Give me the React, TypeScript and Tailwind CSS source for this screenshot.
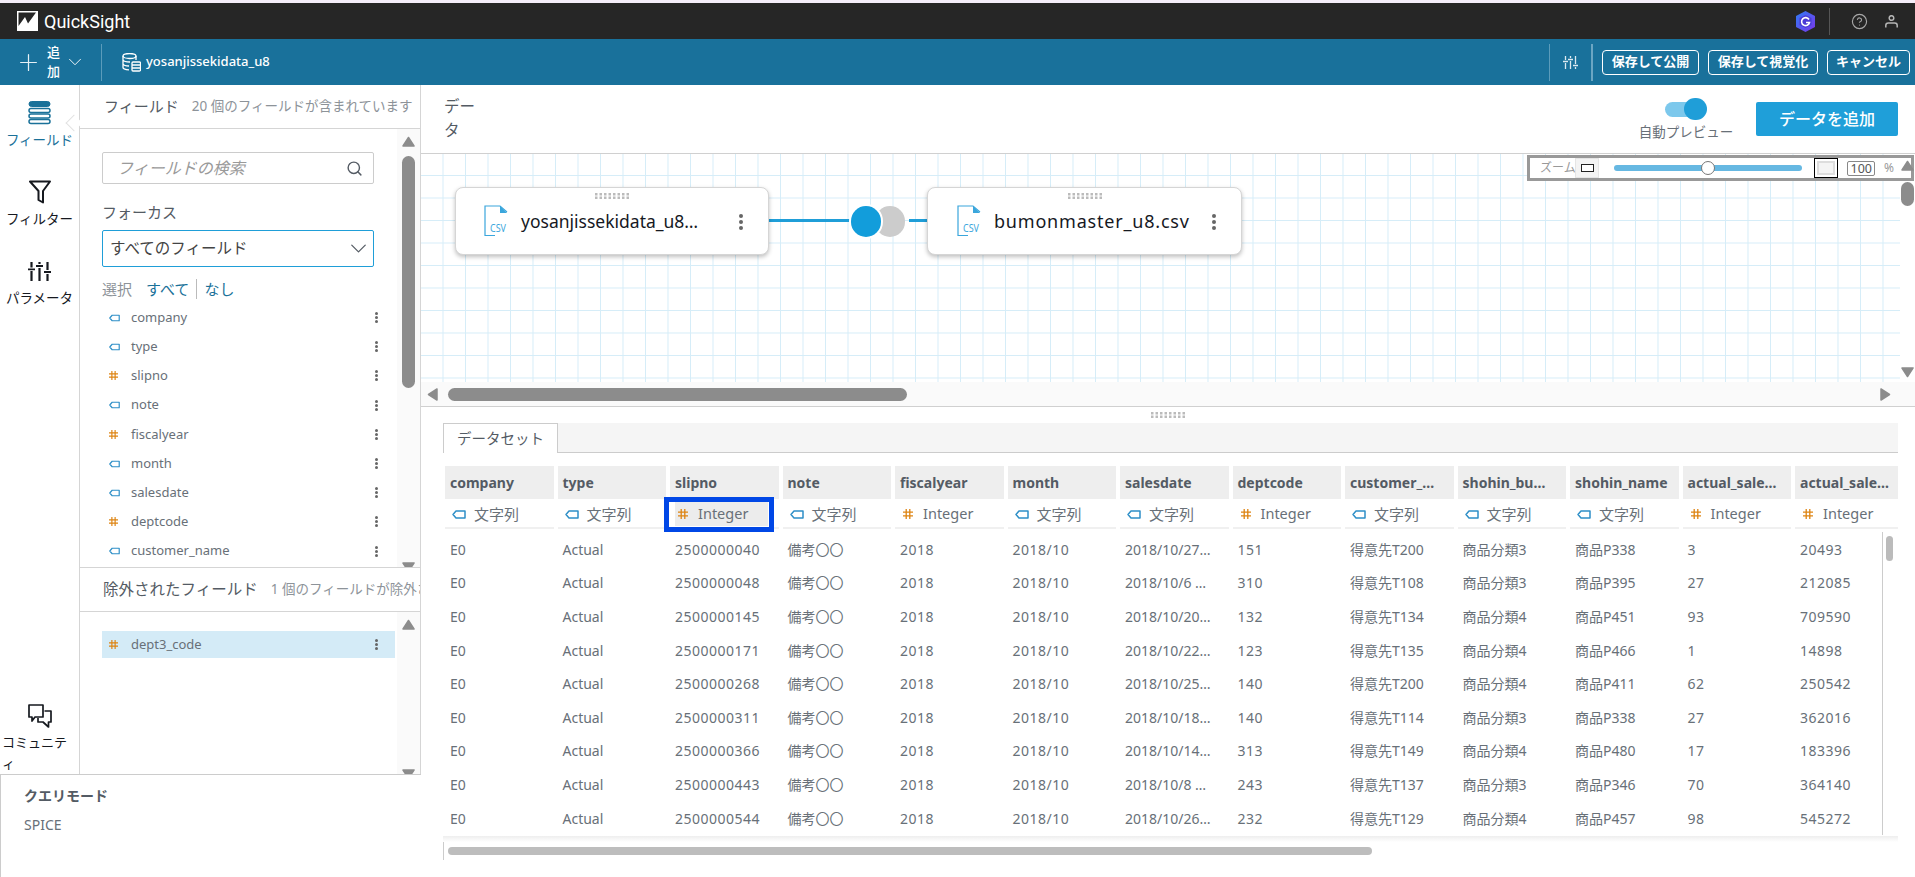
import { ChevronDown, CircleHelp, Plus, Search } from "lucide-react";

const FIELDS: { name: string; num?: boolean }[] = [
  { name: "company" },
  { name: "type" },
  { name: "slipno", num: true },
  { name: "note" },
  { name: "fiscalyear", num: true },
  { name: "month" },
  { name: "salesdate" },
  { name: "deptcode", num: true },
  { name: "customer_name" },
];

const COLUMNS: { name: string; num?: boolean }[] = [
  { name: "company" },
  { name: "type" },
  { name: "slipno", num: true },
  { name: "note" },
  { name: "fiscalyear", num: true },
  { name: "month" },
  { name: "salesdate" },
  { name: "deptcode", num: true },
  { name: "customer_…" },
  { name: "shohin_bu…" },
  { name: "shohin_name" },
  { name: "actual_sale…", num: true },
  { name: "actual_sale…", num: true },
];

const ROWS = [
  ["2500000040", "2018/10/27…", "151", "得意先T200", "商品分類3", "商品P338", "3", "20493"],
  ["2500000048", "2018/10/6 …", "310", "得意先T108", "商品分類3", "商品P395", "27", "212085"],
  ["2500000145", "2018/10/20…", "132", "得意先T134", "商品分類4", "商品P451", "93", "709590"],
  ["2500000171", "2018/10/22…", "123", "得意先T135", "商品分類4", "商品P466", "1", "14898"],
  ["2500000268", "2018/10/25…", "140", "得意先T200", "商品分類4", "商品P411", "62", "250542"],
  ["2500000311", "2018/10/18…", "140", "得意先T114", "商品分類3", "商品P338", "27", "362016"],
  ["2500000366", "2018/10/14…", "313", "得意先T149", "商品分類4", "商品P480", "17", "183396"],
  ["2500000443", "2018/10/8 …", "243", "得意先T137", "商品分類3", "商品P346", "70", "364140"],
  ["2500000544", "2018/10/26…", "232", "得意先T129", "商品分類4", "商品P457", "98", "545272"],
];

// columns whose digits run a little wider than Noto Sans in the reference
const WIDE_DIGITS = [2, 4, 5, 7, 11, 12];

function TagIcon({ w = 11, h = 8 }: { w?: number; h?: number }) {
  return (
    <svg width={w} height={h} viewBox="0 0 14 9" fill="none" className="shrink-0">
      <path d="M1 4.5 L4 1 H13 V8 H4 Z" stroke="#2e8fc7" strokeWidth="1.5" strokeLinejoin="round" />
    </svg>
  );
}

function HashIcon({ size = 9 }: { size?: number }) {
  return (
    <svg width={size} height={size} viewBox="0 0 10 10" stroke="#dd8412" strokeWidth="1.3" className="shrink-0">
      <path d="M3.2 0 V10 M6.8 0 V10 M0 3.2 H10 M0 6.8 H10" />
    </svg>
  );
}

function Kebab({ large = false }: { large?: boolean }) {
  const dot = large ? "w-[4px] h-[4px] bg-[#666]" : "w-[3px] h-[3px] bg-[#666]";
  return (
    <div className={`flex flex-col items-center ${large ? "gap-[2px]" : "gap-[1px]"}`}>
      <span className={`rounded-full ${dot}`} />
      <span className={`rounded-full ${dot}`} />
      <span className={`rounded-full ${dot}`} />
    </div>
  );
}

function DragDots() {
  return (
    <svg width="34" height="6" viewBox="0 0 34 6" fill="#bbb">
      {[0, 1, 2, 3, 4, 5, 6, 7].map((i) => (
        <g key={i}>
          <rect x={i * 4.5} y="0" width="2.5" height="2.5" />
          <rect x={i * 4.5} y="3.5" width="2.5" height="2.5" />
        </g>
      ))}
    </svg>
  );
}

function ArrowUp() {
  return (
    <svg width="13" height="11" viewBox="0 0 13 11" fill="#8c8c8c" className="shrink-0">
      <path d="M6.5 1.5 L12 10 H1 Z" stroke="#8c8c8c" strokeWidth="1.5" strokeLinejoin="round" />
    </svg>
  );
}

function ArrowDown() {
  return (
    <svg width="13" height="11" viewBox="0 0 13 11" fill="#8c8c8c" className="shrink-0">
      <path d="M6.5 9.5 L12 1 H1 Z" stroke="#8c8c8c" strokeWidth="1.5" strokeLinejoin="round" />
    </svg>
  );
}

function ArrowSide({ right = false }: { right?: boolean }) {
  return (
    <svg width="11" height="13" viewBox="0 0 11 13" fill="#8c8c8c" className="shrink-0">
      <path
        d={right ? "M9.5 6.5 L1 1 V12 Z" : "M1.5 6.5 L10 1 V12 Z"}
        stroke="#8c8c8c"
        strokeWidth="1.5"
        strokeLinejoin="round"
      />
    </svg>
  );
}

function CsvIcon() {
  return (
    <svg width="24" height="32" viewBox="0 0 24 32" fill="none" className="shrink-0 overflow-visible">
      <path d="M11 30.5 H1 V1 H16 L23 7" stroke="#3aa6dc" strokeWidth="1.2" />
      <path d="M16 1 L23 8 H16 Z" fill="#3aa6dc" />
      <text x="6" y="27" fontSize="11" fill="#3aa6dc" textLength="16" lengthAdjust="spacingAndGlyphs">
        CSV
      </text>
    </svg>
  );
}

function RailItem({ label, icon, active = false }: { label: string; icon: React.ReactNode; active?: boolean }) {
  return (
    <div className={`flex flex-col items-center w-full ${active ? "text-[#1a7199]" : "text-[#16191f]"}`}>
      <div className="h-[24px] flex items-center justify-center">{icon}</div>
      <div className="text-[13.5px] leading-[21px] mt-[5px] text-center whitespace-nowrap">{label}</div>
    </div>
  );
}

function Rail() {
  return (
    <div className="relative w-[80px] shrink-0 border-r border-[#d5d5d5] flex flex-col items-center pt-[16px]">
      <div className="absolute right-[-1px] top-[32px] w-[12px] h-[12px] rotate-45 bg-white border-l border-b border-[#e2e2e2]" />
      <RailItem
        active
        label="フィールド"
        icon={
          <svg width="23" height="24" viewBox="0 0 23 24" fill="none" stroke="#1a7199">
            <rect x="1" y="0.5" width="21" height="5" rx="2.5" fill="#1a7199" strokeWidth="1" />
            <rect x="1" y="7.5" width="21" height="4" rx="2" strokeWidth="1.5" />
            <rect x="1" y="13" width="21" height="4" rx="2" strokeWidth="1.5" />
            <rect x="1" y="18.5" width="21" height="4" rx="2" strokeWidth="1.5" />
          </svg>
        }
      />
      <div className="h-[29px]" />
      <RailItem
        label="フィルター"
        icon={
          <svg width="22" height="24" viewBox="0 0 22 24" fill="none" stroke="#16191f" strokeWidth="2">
            <path d="M1 1.5 H21 L14 11 V22.5 L9.5 20 V11 Z" strokeLinejoin="round" />
          </svg>
        }
      />
      <div className="h-[29px]" />
      <RailItem
        label="パラメータ"
        icon={
          <svg width="23" height="19" viewBox="0 0 23 19" stroke="#16191f" strokeWidth="2.2" fill="none">
            <path d="M3.5 0 V5.5 M3.5 9 V19 M11.5 0 V2 M11.5 6 V19 M19.5 0 V8 M19.5 12 V19" />
            <path d="M0 7.3 H7 M8 4 H15 M16 10 H23" strokeWidth="1.8" />
          </svg>
        }
      />
      <div className="mt-auto flex flex-col items-center w-full">
        <svg width="24" height="24" viewBox="0 0 24 24" fill="none" stroke="#16191f" strokeWidth="1.7" strokeLinejoin="round">
          <path d="M1 1 H15 V13 H7 L4 17 V13 H1 Z" />
          <path d="M16.5 7 H23 V18 H20.5 V23 L15 18 H10 V14" />
        </svg>
        <div className="self-start ml-[2px] text-[13px] leading-[21px] mt-[4px] w-[66px] text-[#16191f] [word-break:break-all]">
          コミュニティ
        </div>
      </div>
    </div>
  );
}

function FieldRow({ name, num, selected = false }: { name: string; num?: boolean; selected?: boolean }) {
  return (
    <div className={`flex items-center shrink-0 pl-[7px] pr-[17px] ${selected ? "h-[27px] bg-[#d4ebf7]" : "h-[29.2px]"}`}>
      <div className="w-[22px] flex items-center">{num ? <HashIcon /> : <TagIcon />}</div>
      <span className="flex-1 text-[13px] text-[#687078]">{name}</span>
      <Kebab />
    </div>
  );
}

function FieldPanel() {
  return (
    <div className="w-[341px] shrink-0 border-r border-[#d5d5d5] flex flex-col min-h-0">
      <div className="h-[44px] shrink-0 border-b border-[#d5d5d5] flex items-center pl-[24px] whitespace-nowrap overflow-hidden">
        <span className="text-[15px] text-[#545b64]">フィールド</span>
        <span className="text-[13.5px] text-[#8d9399] ml-[13px]">20 個のフィールドが含まれています</span>
      </div>
      <div className="h-[438px] shrink-0 flex">
        <div className="w-[317px] pl-[22px] pt-[23px] overflow-hidden">
          <div className="w-[272px] h-[32px] border border-[#ccc] rounded-[2px] flex items-center pl-[14px] pr-[10px]">
            <span className="flex-1 italic text-[16px] text-[#9a9a9a]">フィールドの検索</span>
            <Search size={17} color="#545b64" strokeWidth={2} />
          </div>
          <div className="mt-[16px] h-[24px] leading-[24px] text-[15px] text-[#545b64]">フォーカス</div>
          <div className="mt-[6px] w-[272px] h-[37px] border border-[#1f9ed8] rounded-[2px] flex items-center pl-[7px] pr-[1px]">
            <span className="flex-1 text-[15.5px] text-[#444]">すべてのフィールド</span>
            <ChevronDown size={27} color="#545b64" strokeWidth={1.1} />
          </div>
          <div className="mt-[11px] h-[22px] flex items-center text-[15px]">
            <span className="text-[#8d9399]">選択</span>
            <span className="text-[#1a7199] ml-[14px]">すべて</span>
            <span className="w-px h-[20px] bg-[#bbb] ml-[7px]" />
            <span className="text-[#1a7199] ml-[7px]">なし</span>
          </div>
          <div className="mt-[3px] mr-[2px]">
            {FIELDS.map((f) => (
              <FieldRow key={f.name} name={f.name} num={f.num} />
            ))}
          </div>
        </div>
        <div className="flex-1 bg-[#fafafa] flex flex-col items-center pt-[7px] overflow-hidden">
          <ArrowUp />
          <div className="w-[13px] h-[232px] shrink-0 mt-[9px] rounded-full bg-[#8c8c8c]" />
          <div className="mt-[174px] shrink-0">
            <ArrowDown />
          </div>
        </div>
      </div>
      <div className="h-[45px] shrink-0 border-y border-[#d5d5d5] flex items-center pl-[23px] whitespace-nowrap overflow-hidden">
        <span className="text-[15.5px] text-[#545b64]">除外されたフィールド</span>
        <span className="text-[13.5px] text-[#8d9399] ml-[13px]">1 個のフィールドが除外されています</span>
      </div>
      <div className="flex-1 min-h-0 flex">
        <div className="w-[317px] pl-[22px] pt-[19px] pr-[2px]">
          <FieldRow name="dept3_code" num selected />
        </div>
        <div className="flex-1 bg-[#fafafa] flex flex-col items-center pt-[7px] overflow-hidden">
          <ArrowUp />
          <div className="mt-[139px] shrink-0">
            <ArrowDown />
          </div>
        </div>
      </div>
    </div>
  );
}

function DataCard({ name, width, gap, textClass }: { name: string; width: string; gap: string; textClass: string }) {
  return (
    <div className={`relative h-[68px] shrink-0 bg-white rounded-[8px] border border-[#d5d5d5] shadow-[0_2px_4px_rgba(0,0,0,0.25)] flex items-center ${width}`}>
      <div className="absolute top-[5px] left-1/2 -translate-x-1/2 flex">
        <DragDots />
      </div>
      <div className={`flex items-center ${gap}`}>
        <CsvIcon />
        <span className={`text-[#16191f] whitespace-nowrap ml-[13px] ${textClass}`}>{name}</span>
      </div>
      <div className="absolute right-[25px] top-[26px]">
        <Kebab large />
      </div>
    </div>
  );
}

function ZoomControl() {
  return (
    <div className="absolute z-20 right-[1px] top-[1px] w-[387px] h-[26px] bg-white border-[3px] border-[#999] flex items-center pl-[10px]">
      <span className="text-[12px] text-[#999] w-[35px] whitespace-nowrap">ズーム</span>
      <div className="w-[24px] h-[20px] border border-[#e5e5e5] bg-[#f4f4f4] flex items-center justify-center">
        <span className="w-[13px] h-[8px] border-[1.5px] border-[#222] bg-white" />
      </div>
      <div className="relative w-[188px] h-[6px] ml-[15px] rounded-full bg-[#66b8e2]">
        <span className="absolute left-[87px] top-[-4px] w-[14px] h-[14px] rounded-full bg-white border border-[#777]" />
      </div>
      <div className="w-[24px] h-[20px] ml-[12px] border border-black flex items-center justify-center">
        <span className="w-[18px] h-[14px] border-[2px] border-[#ddd] bg-[#f4f4f4]" />
      </div>
      <div className="w-[28px] h-[15px] ml-[9px] border border-[#888] rounded-[2px] text-[12.5px] leading-[13px] text-right pr-[2px] text-[#555]">
        100
      </div>
      <span className="text-[12px] text-[#999] ml-[9px]">%</span>
    </div>
  );
}

function Canvas() {
  return (
    <div className="relative h-[254px] shrink-0 border-y border-[#d0d0d0] flex flex-col">
      <div className="flex-1 min-h-0 flex">
        <div className="flex-1 pt-[33px] pl-[34px] flex items-start bg-[linear-gradient(#d6edf8_1px,transparent_1px),linear-gradient(90deg,#d6edf8_1px,transparent_1px)] bg-[size:22.5px_22.5px] bg-[position:21.5px_21px]">
          <DataCard name="yosanjissekidata_u8…" width="w-[314px]" gap="pl-[28px]" textClass="text-[17.5px]" />
          <div className="h-[3px] w-[82px] bg-[#1f9ed8] mt-[32px] shrink-0" />
          <div className="flex mt-[19px] shrink-0">
            <div className="relative z-10 w-[30px] h-[31px] rounded-full bg-[#129ddb] ring-2 ring-white" />
            <div className="w-[30px] h-[31px] rounded-full bg-[#cccccc] ml-[-6px]" />
          </div>
          <div className="h-[3px] w-[18px] bg-[#1f9ed8] mt-[32px] ml-[4px] shrink-0" />
          <DataCard name="bumonmaster_u8.csv" width="w-[315px]" gap="pl-[29px]" textClass="text-[18px] tracking-[0.8px]" />
        </div>
        <div className="relative z-30 w-[15px] flex flex-col items-center pt-[6px]">
          <ArrowUp />
          <div className="w-[13px] h-[24px] shrink-0 mt-[11px] rounded-full bg-[#8c8c8c]" />
          <div className="mt-[161px] shrink-0">
            <ArrowDown />
          </div>
        </div>
      </div>
      <div className="h-[24px] shrink-0 bg-[#fafafa] flex items-center pl-[6px] pr-[24px]">
        <ArrowSide />
        <div className="w-[459px] h-[13px] rounded-full bg-[#8c8c8c] ml-[10px]" />
        <div className="flex-1" />
        <ArrowSide right />
      </div>
      <ZoomControl />
    </div>
  );
}

function DataTable() {
  return (
    <div className="relative mt-[13px] ml-[2px] w-[1453px] overflow-hidden">
      <div className="flex gap-[4px]">
        {COLUMNS.map((c, i) => (
          <div key={i} className="w-[108.5px] h-[33px] shrink-0 bg-[#eeeeee] pl-[5px] flex items-center">
            <span className="text-[14px] font-bold text-[#545b64] whitespace-nowrap">{c.name}</span>
          </div>
        ))}
      </div>
      <div className="flex gap-[4px]">
        {COLUMNS.map((c, i) => (
          <div key={i} className="w-[108.5px] h-[30px] pt-[2px] shrink-0 border-b-2 border-[#f0f0f0] flex items-center">
            <div
              className={`flex items-center h-[24px] ${
                c.name === "slipno" ? "w-[93px] ml-[5px] pl-[3px] bg-[#ececec]" : c.num ? "pl-[8px]" : "pl-[7px]"
              }`}
            >
              {c.num ? <HashIcon size={10} /> : <TagIcon w={14} h={9} />}
              <span className={`whitespace-nowrap text-[#687078] ${c.num ? "text-[14.5px] ml-[10px]" : "text-[15px] ml-[8px]"}`}>
                {c.num ? "Integer" : "文字列"}
              </span>
            </div>
          </div>
        ))}
      </div>
      <div className="mt-[3.5px]">
        {ROWS.map((r) => (
          <div key={r[0]} className="flex gap-[4px] h-[33.6px] items-center text-[14px] text-[#687078] whitespace-nowrap">
            {["E0", "Actual", r[0], "備考〇〇", "2018", "2018/10", r[1], r[2], r[3], r[4], r[5], r[6], r[7]].map((v, j) => (
              <div key={j} className={`w-[108.5px] shrink-0 pl-[5px] overflow-hidden ${WIDE_DIGITS.includes(j) ? "tracking-[0.5px]" : ""}`}>
                {v}
              </div>
            ))}
          </div>
        ))}
      </div>
      <div className="absolute left-[219px] top-[31px] w-[110px] h-[35px] border-[5px] border-[#0047e6]" />
      <div className="absolute left-[1436.5px] top-[66px] bottom-0 w-px bg-[#ccc]" />
      <div className="absolute left-[1441px] top-[70px] w-[7px] h-[25px] rounded-full bg-[#bbb]" />
    </div>
  );
}

function Header() {
  return (
    <>
      <div className="h-[3px] bg-[#f4edf9]" />
      <div className="h-[36px] bg-[#262626] flex items-center pl-[17px] pr-[17px]">
        <svg width="21" height="20" viewBox="0 0 21 20">
          <rect width="21" height="20" fill="#fff" />
          <path d="M1.5 1.5 H19 L11 12.5 L8 6 L1.5 15 Z" fill="#262626" />
        </svg>
        <span className="text-[18px] text-white ml-[6px] [font-family:Roboto,sans-serif]">QuickSight</span>
        <div className="flex-1" />
        <svg width="19" height="21" viewBox="0 0 19 21" fill="none">
          <defs>
            <linearGradient id="shield" x1="0" y1="0" x2="1" y2="1">
              <stop offset="0" stopColor="#2f7cf6" />
              <stop offset="1" stopColor="#7a35e8" />
            </linearGradient>
          </defs>
          <path d="M9.5 0 L19 5 V16 L9.5 21 L0 16 V5 Z" fill="url(#shield)" />
          <path d="M9.5 4 L15.5 7 V14 L9.5 17 L3.5 14 V7 Z" fill="#4a3bd6" />
          <path d="M13 8.5 A4 4 0 1 0 13.5 11.5 H10" stroke="#fff" strokeWidth="1.6" />
        </svg>
        <div className="w-px h-[27px] bg-[#555] ml-[14px]" />
        <CircleHelp size={17} color="#a8a8a8" strokeWidth={1.6} className="ml-[21px]" />
        <svg width="13" height="13" viewBox="0 0 13 13" fill="none" stroke="#b5b5b5" strokeWidth="1.5" className="ml-[17px]">
          <circle cx="6.5" cy="3" r="2.3" />
          <path d="M0.8 12.5 V10.5 Q0.8 8 3.3 8 H9.7 Q12.2 8 12.2 10.5 V12.5" />
        </svg>
      </div>
      <div className="h-[46px] bg-[#19719b] flex items-center text-white">
        <Plus size={27} strokeWidth={1.1} className="ml-[15px]" color="#e6f0f5" />
        <div className="w-[13px] ml-[5px] text-[13px] leading-[19px] font-medium">追加</div>
        <ChevronDown size={22} strokeWidth={1} className="ml-[4px]" />
        <div className="w-px h-[37px] bg-[#5b9cbb] ml-[15px]" />
        <svg width="19" height="19" viewBox="0 0 19 19" fill="none" stroke="#fff" strokeWidth="1.3" className="ml-[20px]">
          <ellipse cx="7.5" cy="3" rx="6.5" ry="2.5" />
          <path d="M1 3 V14.5 Q1 16.5 7 16.8 M14 3 V7 M1 7 Q2 9 8 9 M1 11 Q2 13 7 13" />
          <rect x="10" y="9" width="8.5" height="9" rx="1" />
          <path d="M10 12 H18.5 M10 15 H18.5" />
        </svg>
        <span className="text-[13px] font-medium ml-[5px]">yosanjissekidata_u8</span>
        <div className="flex-1" />
        <div className="w-px h-[37px] bg-[#5b9cbb]" />
        <svg width="15" height="13" viewBox="0 0 15 13" fill="none" stroke="#dbe9f0" strokeWidth="1.3" className="ml-[13px]">
          <path d="M2.5 0 V4 M2.5 7 V13 M7.5 0 V2 M7.5 5 V13 M12.5 0 V8 M12.5 11 V13" />
          <path d="M0 5.5 H5 M5 3.5 H10 M10 9.5 H15" />
        </svg>
        <div className="w-[2px] h-[37px] bg-[#6ba6c3] ml-[13px]" />
        <button className="ml-[9px] w-[97px] h-[25px] rounded-[4px] border border-white text-[13px] font-bold">保存して公開</button>
        <button className="ml-[9px] w-[110px] h-[25px] rounded-[4px] border border-white text-[13px] font-bold">保存して視覚化</button>
        <button className="ml-[9px] w-[83px] h-[25px] rounded-[4px] border border-white text-[13px] font-bold mr-[5px]">キャンセル</button>
      </div>
    </>
  );
}

export default function App() {
  return (
    <div className="w-[1915px] h-[877px] overflow-hidden bg-white flex flex-col [font-family:'Noto_Sans','Noto_Sans_CJK_JP',sans-serif]">
      <Header />
      <div className="flex-1 min-h-0 flex">
        <div className="w-[421px] shrink-0 flex flex-col">
          <div className="h-[689px] shrink-0 flex">
            <Rail />
            <FieldPanel />
          </div>
          <div className="flex-1 border-t border-l border-[#ccc] pl-[23px] pt-[11px]">
            <div className="text-[14px] font-bold text-[#545b64] leading-[20px]">クエリモード</div>
            <div className="text-[14px] text-[#687078] leading-[20px] mt-[9px]">SPICE</div>
          </div>
        </div>
        <div className="flex-1 min-w-0 flex flex-col">
          <div className="h-[68px] shrink-0 relative flex pl-[23px]">
            <div className="w-[34px] pt-[9px] text-[15.5px] leading-[24px] text-[#545b64]">データ</div>
            <div className="flex-1" />
            <div className="w-[94px] flex flex-col items-center pt-[13px] mr-[23px]">
              <div className="relative w-[42px] h-[22px]">
                <div className="absolute left-0 top-[4px] w-[33px] h-[15px] rounded-full bg-[#7cc8ec]" />
                <div className="absolute right-0 top-0 w-[23px] h-[22px] rounded-full bg-[#1f9ed8]" />
              </div>
              <span className="text-[13.5px] text-[#687078] mt-[2px] whitespace-nowrap">自動プレビュー</span>
            </div>
            <button className="w-[142px] h-[34px] mt-[17px] mr-[17px] bg-[#1f9fd9] rounded-[2px] text-white text-[16px] font-medium">
              データを追加
            </button>
          </div>
          <Canvas />
          <div className="h-[16px] shrink-0 flex items-center justify-center">
            <DragDots />
          </div>
          <div className="pl-[22px] flex flex-col min-h-0">
            <div className="w-[1455px] h-[30px] shrink-0 bg-[#f5f5f5] border-b border-[#ccc] flex">
              <div className="w-[115px] h-[30px] bg-white border border-b-0 border-[#ccc] flex items-center justify-center text-[14.5px] text-[#545b64]">
                データセット
              </div>
            </div>
            <DataTable />
            <div className="h-[6px] mt-[1px] w-[1455px] bg-gradient-to-b from-[#eeeeee] to-white" />
            <div className="flex items-center h-[18px] w-[1455px] border-l border-[#ccc]">
              <div className="ml-[4px] w-[924px] h-[8px] rounded-full bg-[#bdbdbd]" />
            </div>
          </div>
        </div>
      </div>
    </div>
  );
}
